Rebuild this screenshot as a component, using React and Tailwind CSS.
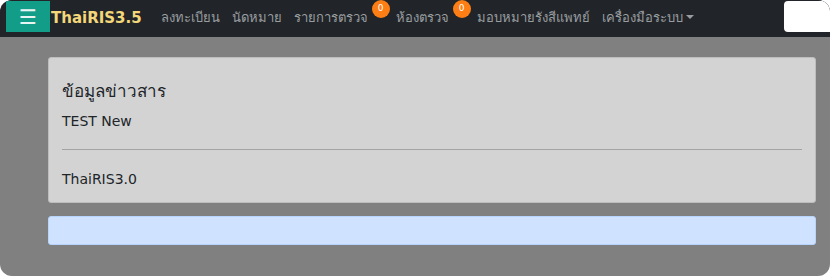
const navLinks = [
  { label: "ลงทะเบียน" },
  { label: "นัดหมาย" },
  { label: "รายการตรวจ", badge: "0" },
  { label: "ห้องตรวจ", badge: "0" },
  { label: "มอบหมายรังสีแพทย์" },
  { label: "เครื่องมือระบบ", caret: true },
];

const NavBar = () => (
  <nav className="flex h-[37px] items-start bg-[#212529]">
    <button
      type="button"
      className="ml-[6px] mt-[1px] flex h-[31px] w-[44px] items-center justify-center bg-[#129d89] text-[20px] leading-none text-[#e8f5f3]"
    >
      ☰
    </button>
    <span className="ml-[1px] mt-[7px] text-[15px] font-bold text-[#f3d77a] [font-family:'DejaVu_Sans',sans-serif]">
      ThaiRIS3.5
    </span>
    <ul className="ml-[19px] flex items-start">
      {navLinks.map((link) => (
        <li key={link.label} className="mr-[12px] flex items-start">
          <span className="mt-[8px] text-[13px] text-[#9a9da0]">{link.label}</span>
          {link.badge && (
            <span className="ml-[4px] mr-[-6px] flex h-[18px] w-[18px] items-center justify-center rounded-full bg-[#fd7e14] text-[9px] text-white">
              {link.badge}
            </span>
          )}
          {link.caret && (
            <span className="ml-[3px] mt-[15px] h-0 w-0 border-x-[4px] border-t-[4px] border-x-transparent border-t-[#9a9da0]" />
          )}
        </li>
      ))}
    </ul>
    <div className="ml-auto mt-[1px] h-[31px] w-[46px] rounded-l-[4px] bg-white" />
  </nav>
);

export default function App() {
  return (
    <div className="h-[276px] w-[830px] bg-white">
      <div className="flex h-full flex-col overflow-hidden rounded-[12px] bg-[#808080] [font-family:'DejaVu_Sans',sans-serif]">
        <NavBar />
        <main className="ml-[48px] mr-[14px] mt-[20px]">
          <section className="rounded-[3px] border border-[#bdbdbd] bg-[#d3d3d3] px-[13px] pb-[13px] pt-[19px] text-[#212529]">
            <h5 className="text-[17px] leading-[28px]">ข้อมูลข่าวสาร</h5>
            <p className="mt-[6px] text-[14px] leading-[20px]">TEST New</p>
            <hr className="mt-[18px] border-[#a3a3a3]" />
            <p className="mt-[19px] text-[14px] leading-[20px]">ThaiRIS3.0</p>
          </section>
          <div className="mt-[13px] h-[29px] rounded-[3px] border border-[#b6d4fe] bg-[#cfe2ff]" />
        </main>
      </div>
    </div>
  );
}
